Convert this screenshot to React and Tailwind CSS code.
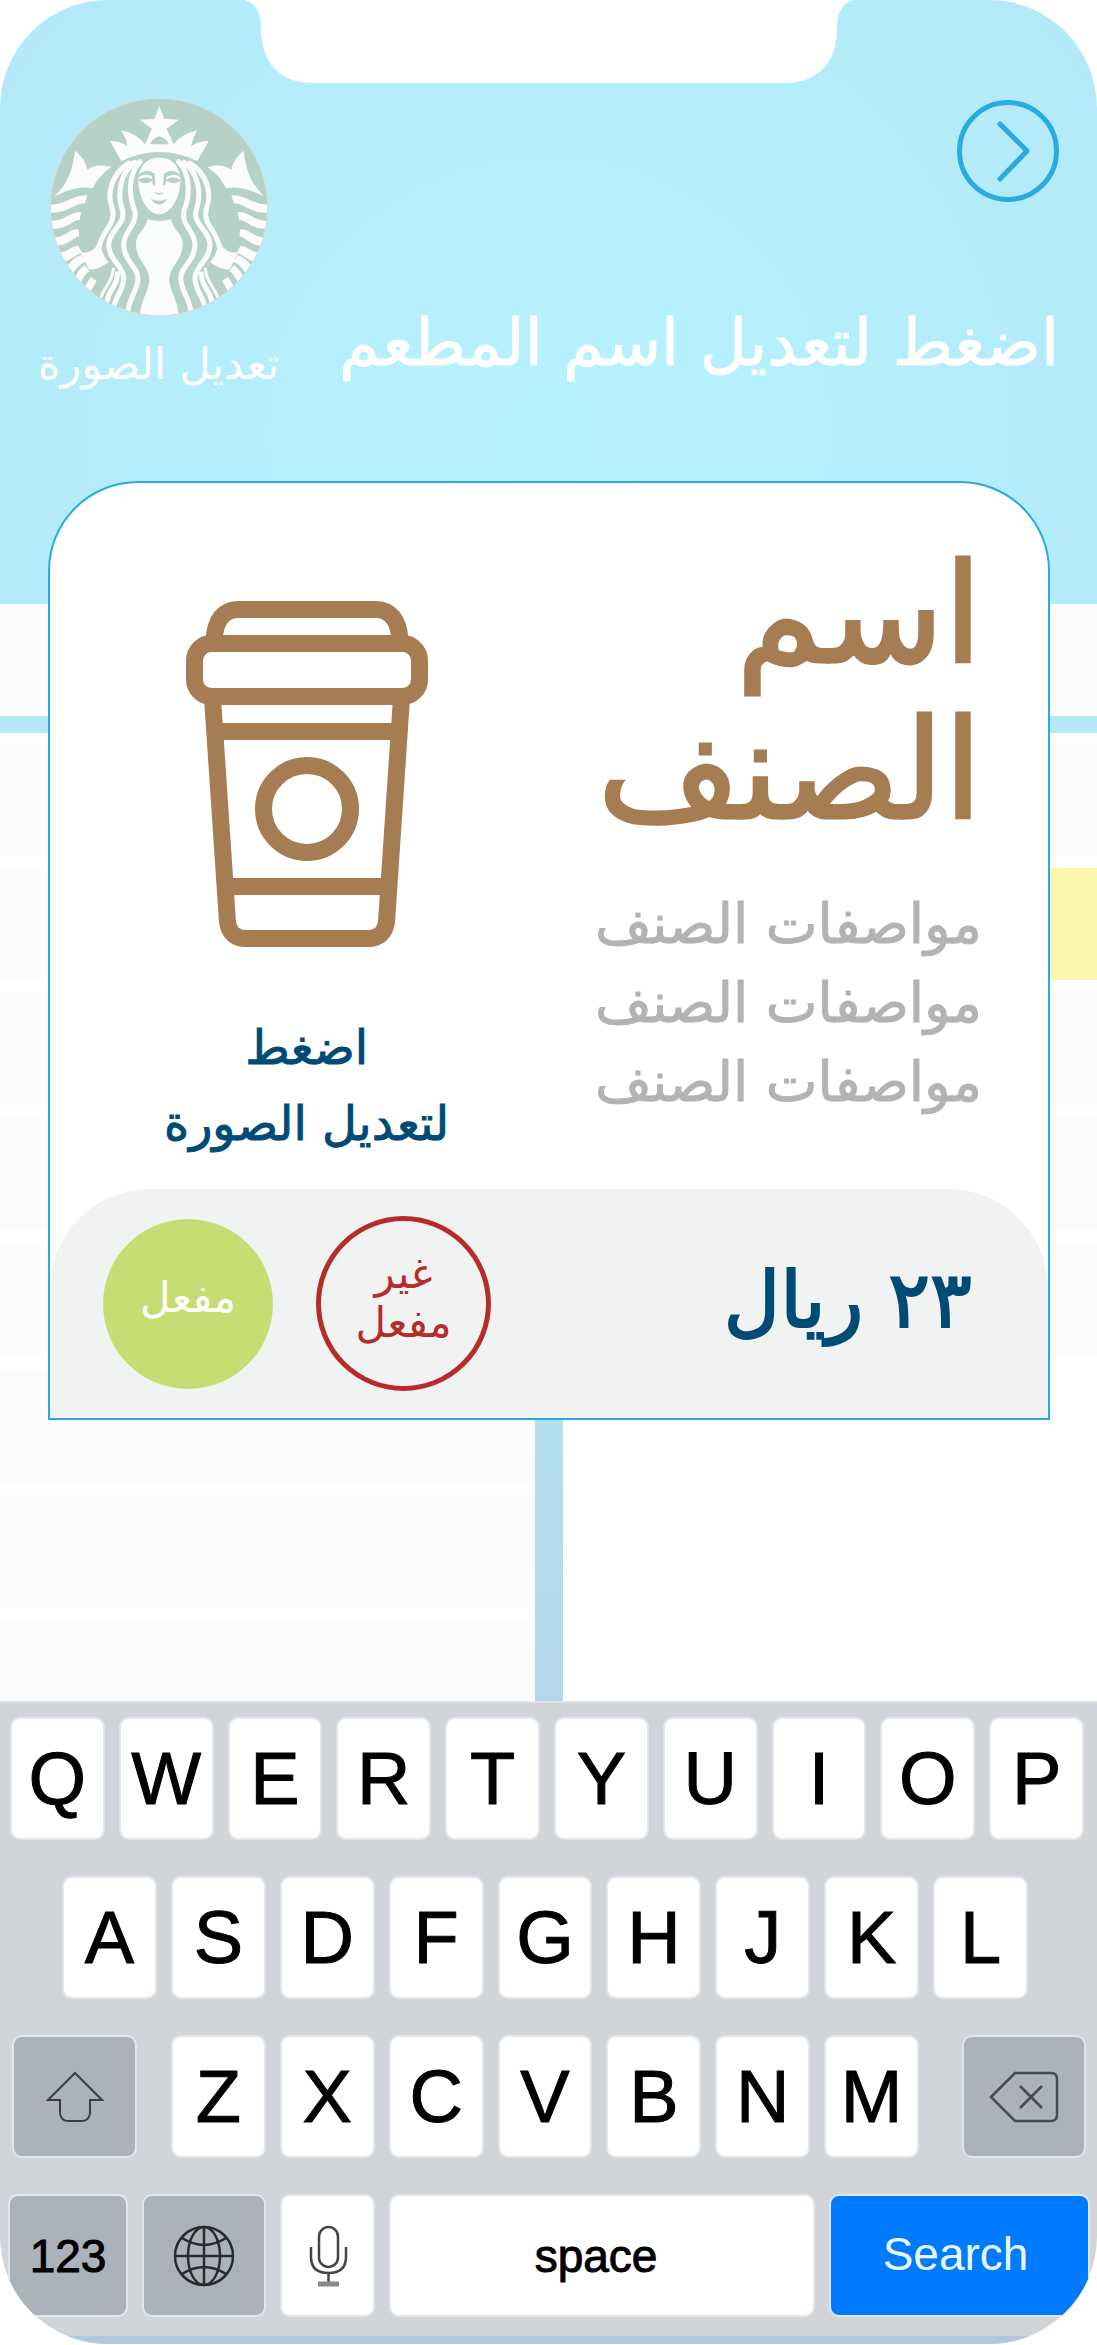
import React from "react";

const BROWN = "#a67c52";

function SirenHalf() {
  return (
    <g>
      <path fill="#fbfdfd" d="M388 78 L373 116 L330 118 L366 145 L345 192 Q318 158 274 150 Q288 172 293 198 Q272 182 240 182 L274 242 Q330 215 388 215 L388 192 L358 192 Q370 172 388 168 Z" />
      <path fill="#fbfdfd" d="M388 232 C345 232 325 262 325 304 C327 352 352 400 388 402 Z" />
      <path fill="#fbfdfd" d="M388 422 Q368 422 352 417 C345 455 318 455 318 492 C318 540 359 560 358 598 C357 635 330 660 330 712 L388 712 Z" />
      <g fill="none" stroke="#fbfdfd" strokeWidth="15" strokeLinecap="round">
        <path d="M298 248 C245 278 230 340 246 382 C262 430 212 455 208 500" />
        <path d="M314 246 C268 280 262 345 277 388 C290 432 235 452 236 496 C240 544 280 556 281 592 C281 634 254 646 250 690" />
        <path d="M330 244 C292 282 298 350 313 388 C326 434 279 452 281 496 C284 546 325 560 324 596 C321 636 296 652 292 702" />
        <path d="M262 580 C262 620 238 624 230 664" />
        <path strokeWidth="9" d="M250 566 C246 606 226 616 214 648" />
      </g>
      <path fill="#fbfdfd" d="M152 517 Q190 522 206 484 C216 510 222 532 236 546 Q196 574 176 566 Z" />
      <path fill="#fbfdfd" d="M135 211 C160 232 168 248 172 268 C195 252 215 254 244 260 C215 280 200 300 188 324 C150 315 110 330 73 348 C113 310 128 270 135 211 Z" />
      <g fill="#fbfdfd">
        <path d="M58 372 C100 378 130 342 172 345 L164 369 C130 370 110 402 58 397 Z" />
        <path d="M62 421 C100 425 120 393 153 395 L149 418 C125 420 110 447 66 446 Z" />
        <path d="M72 471 C105 472 120 443 145 447 L148 468 C130 470 115 496 82 496 Z" />
        <path d="M90 516 C115 515 125 495 145 497 L156 518 C138 520 126 540 104 542 Z" />
        <path d="M112 556 Q132 530 154 524 L166 544 Q145 552 130 578 Z" />
        <path d="M136 590 Q146 566 164 554 L178 572 Q160 584 152 610 Z" />
        <path d="M162 622 L182 590 L200 602 L180 636 Z" />
      </g>
    </g>
  );
}

function Logo() {
  return (
    <svg viewBox="60 53 654 654" className="size-[218px]" role="img" aria-label="شعار المطعم">
      <defs>
        <clipPath id="disc">
          <circle cx="387" cy="380" r="326" />
        </clipPath>
      </defs>
      <g clipPath="url(#disc)">
        <rect x="60" y="53" width="654" height="654" fill="#b6d2c7" />
        <SirenHalf />
        <g transform="matrix(-1 0 0 1 776 0)">
          <SirenHalf />
        </g>
        <path d="M388 86 V167 M388 193 V214 M388 233 V401 M388 423 V712" fill="none" stroke="#fbfdfd" strokeWidth="4" />
        <g fill="#b6d2c7">
          <path d="M326 284 Q348 260 374 280 L376 316 L368 312 L366 288 Q346 276 326 290 Z" />
          <path d="M450 284 Q428 260 402 280 L399 316 L407 312 L410 290 Q430 276 450 290 Z" />
          <path d="M326 298 Q350 282 371 300 Q350 316 326 302 Z" />
          <path d="M450 298 Q428 282 407 300 Q428 316 450 302 Z" />
          <path d="M372 336 Q388 340 404 336 Q388 350 372 336 Z" />
          <path d="M362 356 Q388 366 412 356 Q388 390 362 356 Z" />
        </g>
      </g>
      <circle cx="387" cy="380" r="326" fill="none" stroke="#d5dedb" strokeWidth="3" />
    </svg>
  );
}

function Cup() {
  return (
    <svg viewBox="186 601 242 346" className="h-[346px] w-[242px]" fill="none" stroke={BROWN} strokeWidth="17" aria-hidden="true">
      <path d="M214 640 Q216 610 238 609.500 H376 Q398 610 400 640" />
      <rect x="194.500" y="643.500" width="225" height="53" rx="17" />
      <path d="M212.500 698 L227.500 922 Q230 938.500 246 938.500 H368 Q384 938.500 386.500 922 L401.500 698" />
      <path d="M214 731.500 H400 M225 886.500 H389" />
      <circle cx="307" cy="809" r="43.500" />
    </svg>
  );
}

function Notch() {
  return (
    <svg viewBox="0 0 608 83" className="absolute left-1/2 top-0 h-[83px] w-[608px] -translate-x-1/2" fill="#fff" aria-hidden="true">
      <path d="M0 0 C12 4 16 14 16 28 C16 62 34 83 68 83 H540 C574 83 592 62 592 28 C592 14 596 4 608 0 Z" />
    </svg>
  );
}

function Backdrop() {
  const rows = [false, true, false, false, false];
  return (
    <div className="col-start-1 row-start-1 flex flex-col overflow-hidden" aria-hidden="true">
      <div className="h-[604px] shrink-0 bg-[radial-gradient(circle_at_50%_72%,#b6f2fd_0%,#b5effc_40%,#b4e8f7_100%)]" />
      <div className="h-28 shrink-0 bg-[#fbfdfd]" />
      <div className="mb-2.5 h-[17px] shrink-0 bg-[#b4e8f6]" />
      {rows.map((lit, i) => (
        <div key={i} className="mb-[13px] flex h-28 shrink-0">
          <div className="flex-1 bg-[#fbfdfd]" />
          <div className={lit ? "flex-1 bg-[#fcf7b0]" : "flex-1 bg-[#fbfdfd]"} />
        </div>
      ))}
      <div className="flex flex-1">
        <div className="flex flex-1 flex-col gap-[13px] pt-0.5">
          <div className="h-28 bg-[#fbfdfd]" />
          <div className="h-28 bg-[#fbfdfd]" />
          <div className="flex-1 bg-[#fbfdfd]" />
        </div>
        <div className="w-7 bg-linear-to-b from-[#b4e1f1] to-[#b3d8e9]" />
        <div className="flex-1 bg-white" />
      </div>
    </div>
  );
}

function Card() {
  return (
    <article className="ml-12 mr-[47px] mt-[71px] overflow-hidden rounded-t-[90px] border-2 border-[#29abe2] bg-white">
      <div className="flex h-[706px] justify-between pl-[114px] pr-[66px]">
        <button type="button" className="flex flex-col items-center pt-[118px] text-[48px] leading-[76px] text-[#004b76] [-webkit-text-stroke:1px]">
          <Cup />
          <span className="mt-[62px] whitespace-nowrap" dir="rtl">
            اضغط
            <br />
            لتعديل الصورة
          </span>
        </button>
        <div className="pt-[54px] text-right" dir="rtl">
          <h2 className="text-[138px] leading-[156px] text-[#a67c52] [-webkit-text-stroke:3px]">
            اسم
            <br />
            الصنف
          </h2>
          <ul className="mt-9 whitespace-nowrap text-[55px] leading-[79px] text-[#b3b3b3] [-webkit-text-stroke:1px]">
            <li>مواصفات الصنف</li>
            <li>مواصفات الصنف</li>
            <li>مواصفات الصنف</li>
          </ul>
        </div>
      </div>
      <footer className="flex h-[229px] items-center justify-between rounded-t-[100px] bg-[#f1f3f3] pl-[53px] pr-[76px]">
        <div className="flex items-center gap-[43px] text-[42px] leading-[49px]">
          <button type="button" className="size-[170px] rounded-full bg-[#c6dd74] pb-3 text-white" dir="rtl">مفعل</button>
          <button type="button" className="size-[175px] rounded-full border-[5px] border-[#b52c2b] pb-3 text-[#b52c2b]" dir="rtl">
            غير
            <br />
            مفعل
          </button>
        </div>
        <p className="whitespace-nowrap pb-2 text-[78px] leading-[100px] text-[#004b76] [-webkit-text-stroke:2px]" dir="rtl">٢٣ ريال</p>
      </footer>
    </article>
  );
}

function Key({ children, className = "flex-1 bg-white", label }) {
  return (
    <button type="button" aria-label={label} className={"flex h-[123px] min-w-0 items-center justify-center rounded-[10px] border-2 border-[#e3e7ea] " + className}>
      {children}
    </button>
  );
}

function Letters({ keys }) {
  return keys.split("").map((k) => (
    <Key key={k}>
      <span className="text-[74px] leading-none [-webkit-text-stroke:1px]">{k}</span>
    </Key>
  ));
}

const DARK = "border-[#b9bfc6] bg-[#abb2ba]";

function Keyboard() {
  return (
    <section aria-label="Keyboard" dir="ltr" className="border-b-8 border-[#b0c8dd] bg-[#d1d4d9] pb-[19px] font-['Liberation_Sans',Arial,sans-serif] text-black">
      <div className="flex flex-col gap-9 border-t-2 border-[#e0e4e8] pt-[14px]">
        <div className="flex gap-[14px] pl-[10px] pr-[13px]">
          <Letters keys="QWERTYUIOP" />
        </div>
        <div className="flex gap-[14px] pl-[62px] pr-[69px]">
          <Letters keys="ASDFGHJKL" />
        </div>
        <div className="flex gap-[14px] pl-3 pr-[11px]">
          <Key label="Shift" className={"mr-5 w-[125px] " + DARK}>
            <svg viewBox="0 0 58 52" className="h-[52px] w-[58px]" fill="none" stroke="#3c3c3c" strokeWidth="2">
              <path d="M29 2 L56 29 H44 V42 Q43 50 36 50 H22 Q15 50 14 42 V29 H2 Z" />
            </svg>
          </Key>
          <Letters keys="ZXCVBNM" />
          <Key label="Delete" className={"ml-[29px] w-[124px] " + DARK}>
            <svg viewBox="0 0 70 54" className="h-[54px] w-[70px]" fill="none" stroke="#4a4a4a" strokeWidth="2.500">
              <path d="M2 27 L26 3 H62 Q68 3 68 9 V45 Q68 51 62 51 H26 Z" />
              <path d="M31 16 L53 38 M53 16 L31 38" />
            </svg>
          </Key>
        </div>
        <div className="flex gap-[14px] pl-2 pr-[7px] text-[46px] leading-none">
          <Key className={"w-[120px] [-webkit-text-stroke:1px] " + DARK}>123</Key>
          <Key label="Next keyboard" className={"w-[124px] " + DARK}>
            <svg viewBox="0 0 62 62" className="size-[62px]" fill="none" stroke="#2a2a2a" strokeWidth="2.500">
              <circle cx="31" cy="31" r="29" />
              <ellipse cx="31" cy="31" rx="16" ry="29" />
              <path d="M31 2 V60 M2 31 H60 M9 13 Q31 27 53 13 M9 49 Q31 35 53 49" />
            </svg>
          </Key>
          <Key label="Dictation" className="w-[95px] bg-white">
            <svg viewBox="0 0 40 62" className="h-[62px] w-10" fill="none" stroke="#444" strokeWidth="2.500">
              <rect x="11" y="2" width="19" height="40" rx="9.500" />
              <path d="M3 22 V32 Q3 48 20.500 48 Q38 48 38 32 V22 M20.500 48 V59" />
              <path d="M10 59 H31" stroke="#888" strokeWidth="5" />
            </svg>
          </Key>
          <Key className="flex-1 bg-white pr-3 [-webkit-text-stroke:1px]">space</Key>
          <Key className="w-[261px] border-[#5fa8ee] bg-[#007aff] pb-1 pr-2 text-[#e8f8ff]">Search</Key>
        </div>
      </div>
    </section>
  );
}

export default function App() {
  return (
    <main className="overflow-hidden rounded-[108px] bg-white font-['DejaVu_Sans',sans-serif]">
      <div className="relative grid grid-cols-1">
        <Backdrop />
        <div className="col-start-1 row-start-1 pb-[281px]">
          <header className="flex h-[410px] items-start justify-between px-[38px] text-white">
            <button type="button" className="flex flex-col items-center pt-[98px] text-[43px] leading-[60px]">
              <Logo />
              <span className="mt-[18px] whitespace-nowrap" dir="rtl">تعديل الصورة</span>
            </button>
            <div className="flex flex-col items-end pt-[100px]">
              <button type="button" aria-label="رجوع">
                <svg viewBox="0 0 102 102" className="size-[102px]" fill="none" stroke="#29abe2" strokeWidth="5" strokeLinecap="round" strokeLinejoin="round">
                  <circle cx="51" cy="51" r="48.500" />
                  <path d="M43 24 L70 51 L43 79" />
                </svg>
              </button>
              <h1 className="mt-24 whitespace-nowrap text-[65px] leading-[90px] [-webkit-text-stroke:1px]" dir="rtl">اضغط لتعديل اسم المطعم</h1>
            </div>
          </header>
          <Card />
        </div>
        <Notch />
      </div>
      <Keyboard />
    </main>
  );
}
